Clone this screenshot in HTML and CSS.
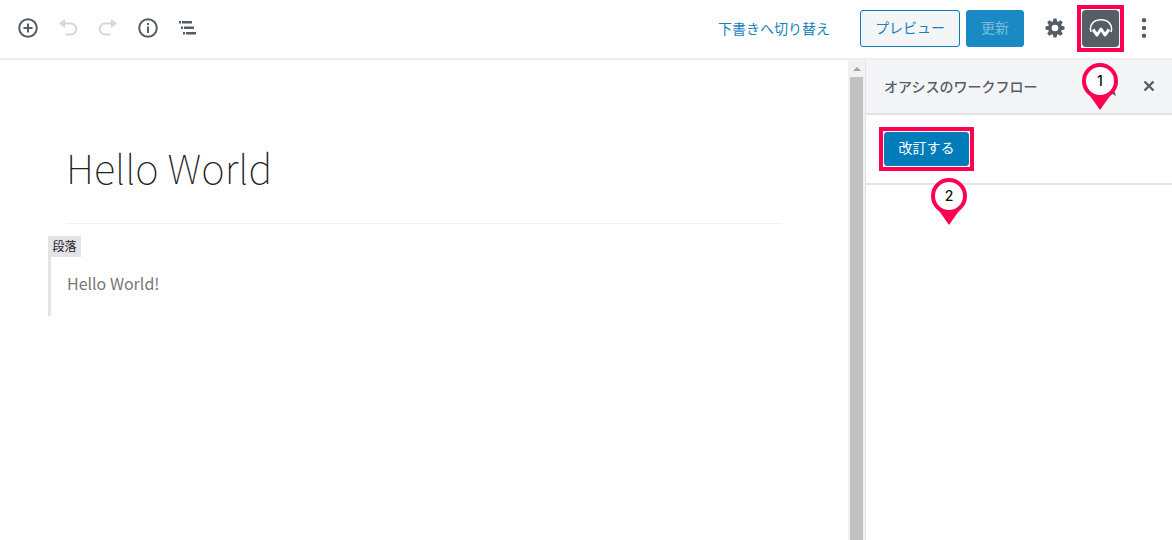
FILE: index.html
```
<!DOCTYPE html>
<html lang="ja">
<head>
    <meta charset="UTF-8">
    <meta name="viewport" content="width=device-width, initial-scale=1.0">
    <title>Hello World</title>
    <link rel="stylesheet" href="styles.css">
</head>
<body>
    <header class="toolbar">
        <div class="tools">
            <button type="button" class="icon-btn" aria-label="ブロックの追加">
                <svg width="20" height="20" viewBox="0 0 20 20" fill="none" stroke="currentColor" stroke-width="2"><circle cx="10" cy="10" r="8.8"/><path d="M10 5.500v9M5.500 10h9"/></svg>
            </button>
            <button type="button" class="icon-btn" aria-label="元に戻す" disabled>
                <svg width="20" height="20" viewBox="0 0 20 20"><path d="M1 5.500L7 1v9z" fill="currentColor"/><path d="M6 5.500h7a5 5.200 0 0 1 0 11H7.500" fill="none" stroke="currentColor" stroke-width="2"/></svg>
            </button>
            <button type="button" class="icon-btn" aria-label="やり直す" disabled>
                <svg width="20" height="20" viewBox="0 0 20 20"><path d="M19 5.500L13 1v9z" fill="currentColor"/><path d="M14 5.500H7a5 5.200 0 0 0 0 11h5.500" fill="none" stroke="currentColor" stroke-width="2"/></svg>
            </button>
            <button type="button" class="icon-btn" aria-label="情報">
                <svg width="20" height="20" viewBox="0 0 20 20"><circle cx="10" cy="10" r="8.800" fill="none" stroke="currentColor" stroke-width="2"/><path d="M9 5h2v2H9zM9 8.500h2V15H9z" fill="currentColor"/></svg>
            </button>
            <button type="button" class="icon-btn" aria-label="ブロックナビゲーション">
                <svg width="20" height="20" viewBox="0 0 20 20" fill="currentColor"><path d="M1 3h2v2.500H1zM4 3h10v2.500H4zM3 8.500h2V11H3zM6 8.500h10V11H6zM5 14h2v2.500H5zM8 14h10v2.500H8z"/></svg>
            </button>
        </div>
        <div class="actions">
            <a href="#" class="draft-link">下書きへ切り替え</a>
            <button type="button" class="btn btn-preview">プレビュー</button>
            <button type="button" class="btn btn-update" disabled>更新</button>
            <button type="button" class="icon-btn gear" aria-label="設定">
                <svg width="20" height="20" viewBox="0 0 20 20"><g fill="currentColor"><circle cx="10" cy="10" r="6.800"/><path id="teeth" d="M8.500 .5h3l.7 3v13l-.7 3h-3l-.7-3v-13z"/><use href="#teeth" transform="rotate(45 10 10)"/><use href="#teeth" transform="rotate(90 10 10)"/><use href="#teeth" transform="rotate(135 10 10)"/></g><circle cx="10" cy="10" r="3.300" fill="#fff"/></svg>
            </button>
            <div class="marked">
                <button type="button" class="workflow-btn" aria-label="オアシスのワークフロー">
                    <svg width="24" height="20" viewBox="0 0 24 20" fill="none" stroke="#fff"><path d="M2 14C-.5 6 6 1.800 12 1.800S24.500 6 22 14" stroke-width="1.500"/><path d="M4 11.500l4 5.500 4-6 4 6 4-5.500" stroke-width="3" stroke-linejoin="round"/></svg>
                </button>
                <div class="pin pin-top">
                    <svg width="36" height="48" viewBox="0 0 36 48"><path d="M6 30h24L18 47z" fill="#ff0050"/><circle cx="18" cy="18" r="16" fill="#fff" stroke="#ff0050" stroke-width="4"/></svg>
                    <span>1</span>
                </div>
            </div>
            <button type="button" class="icon-btn more" aria-label="ツールと設定">
                <svg width="20" height="20" viewBox="0 0 20 20" fill="currentColor"><circle cx="10" cy="2.200" r="2.200"/><circle cx="10" cy="10" r="2.200"/><circle cx="10" cy="17.800" r="2.200"/></svg>
            </button>
        </div>
    </header>
    <div class="layout">
        <main class="editor">
            <h1 class="post-title">Hello World</h1>
            <section class="block">
                <span class="block-label">段落</span>
                <p>Hello World!</p>
            </section>
        </main>
        <div class="scrollbar">
            <svg width="8" height="4" viewBox="0 0 8 4"><path d="M0 4l4-4 4 4z" fill="#a3a3a3"/></svg>
            <div class="thumb"></div>
        </div>
        <aside class="sidebar">
            <div class="sidebar-header">
                <h2>オアシスのワークフロー</h2>
                <button type="button" class="icon-btn" aria-label="ピン留め">
                    <svg width="20" height="20" viewBox="0 0 20 20" fill="currentColor"><path d="M10 1l3 6 6 1-4.500 4.500L17 20l-7-4-6 3 1.500-6.500L1 8l6-1z"/></svg>
                </button>
                <button type="button" class="icon-btn" aria-label="閉じる">
                    <svg width="12" height="12" viewBox="0 0 12 12"><path d="M1.500 1.500l9 9M10.500 1.500l-9 9" stroke="currentColor" stroke-width="2.400"/></svg>
                </button>
            </div>
            <div class="panel">
                <div class="marked">
                    <button type="button" class="btn btn-revise">改訂する</button>
                    <div class="pin pin-bottom">
                        <svg width="36" height="48" viewBox="0 0 36 48"><path d="M6 30h24L18 47z" fill="#ff0050"/><circle cx="18" cy="18" r="16" fill="#fff" stroke="#ff0050" stroke-width="4"/></svg>
                        <span>2</span>
                    </div>
                </div>
            </div>
        </aside>
    </div>
</body>
</html>
```
FILE: styles.css
```
* {
    box-sizing: border-box;
}

body {
    display: flex;
    flex-direction: column;
    min-height: 100vh;
    margin: 0;
    background-color: #fff;
    color: #555d66;
    font-family: "Noto Sans CJK JP", sans-serif;
    font-size: 14px;
}

button {
    margin: 0;
    padding: 0;
    font-family: inherit;
    cursor: pointer;
}

svg {
    display: block;
}

/* toolbar */
.toolbar {
    display: flex;
    justify-content: space-between;
    align-items: center;
    height: 60px;
    padding: 0 10px 2px;
    border-bottom: 2px solid #edeef0;
}

.tools,
.actions {
    display: flex;
    align-items: center;
}

.tools .icon-btn {
    width: 40px;
}

.tools {
    margin-left: -2px;
}

.icon-btn {
    display: flex;
    align-items: center;
    justify-content: center;
    width: 40px;
    height: 36px;
    border: 0;
    background: none;
    color: #555d66;
}

.icon-btn:disabled {
    color: #d5d7d9;
}

.draft-link {
    margin-right: 30px;
    color: #1683bd;
    text-decoration: none;
}

.btn {
    height: 37px;
    padding-bottom: 2px;
    border: 1px solid #0a7ebc;
    border-radius: 3px;
    font-size: 14px;
}

.btn-preview {
    width: 100px;
    margin-right: 6px;
    background-color: #f3f5f6;
    color: #1683bd;
}

.btn-update {
    width: 58px;
    border-color: #1a8ac4;
    background-color: #1a8ac4;
    color: #7bbcdd;
}

.gear {
    width: 36px;
    margin: 0 9px 0 13px;
}

.workflow-btn {
    display: flex;
    align-items: center;
    justify-content: center;
    width: 37px;
    height: 37px;
    border: 0;
    border-radius: 4px;
    background-color: #555d66;
}

.more {
    width: 36px;
    margin-left: 7px;
}

/* highlighted controls */
.marked {
    position: relative;
    outline: 4px solid #ff0050;
    outline-offset: 1px;
}

.pin {
    position: absolute;
    z-index: 1;
    width: 36px;
}

.pin span {
    position: absolute;
    top: 8px;
    left: 0;
    width: 100%;
    color: #111;
    font-family: Inter, sans-serif;
    font-size: 14px;
    font-weight: 500;
    line-height: 20px;
    text-align: center;
}

.pin-top {
    top: 53px;
    left: 0;
}

.pin-bottom {
    top: 46px;
    left: 47px;
}

/* editor */
.layout {
    display: flex;
    flex: 1;
}

.editor {
    flex: 1;
    padding: 77px 66px 0 48px;
}

.post-title {
    margin: 0 0 12px 18px;
    padding-bottom: 26px;
    border-bottom: 1px solid #f0f1f2;
    color: #222;
    font-size: 40px;
    font-weight: 100;
    line-height: 60px;
}

.block {
    height: 80px;
    border-left: 3px solid #e2e4e7;
}

.block-label {
    display: block;
    width: 33px;
    height: 21px;
    margin-left: -3px;
    background-color: #e2e4e7;
    color: #222;
    font-size: 12px;
    line-height: 20px;
    text-align: center;
}

.block p {
    margin: 14px 0 0 16px;
    color: #777;
    font-size: 16px;
    line-height: 24px;
}

.scrollbar {
    display: flex;
    flex-direction: column;
    align-items: center;
    width: 17px;
    padding-top: 7px;
    background-color: #f1f1f1;
}

.thumb {
    flex: 1;
    width: 13px;
    margin-top: 6px;
    background-color: #c1c1c1;
}

/* sidebar */
.sidebar {
    width: 307px;
    border-left: 1px solid #e2e4e7;
}

.sidebar-header {
    display: flex;
    align-items: center;
    height: 55px;
    padding: 0 3px 2px 18px;
    border-bottom: 2px solid #e2e4e7;
    background-color: #f3f4f5;
}

.sidebar-header h2 {
    flex: 1;
    margin: 0;
    font-size: 14px;
    font-weight: 500;
}

.panel {
    display: flex;
    height: 70px;
    padding: 17px 18px;
    border-bottom: 2px solid #e2e4e7;
}

.btn-revise {
    display: block;
    width: 85px;
    height: 34px;
    padding-bottom: 4px;
    background-color: #007cba;
    color: #fff;
}
```
